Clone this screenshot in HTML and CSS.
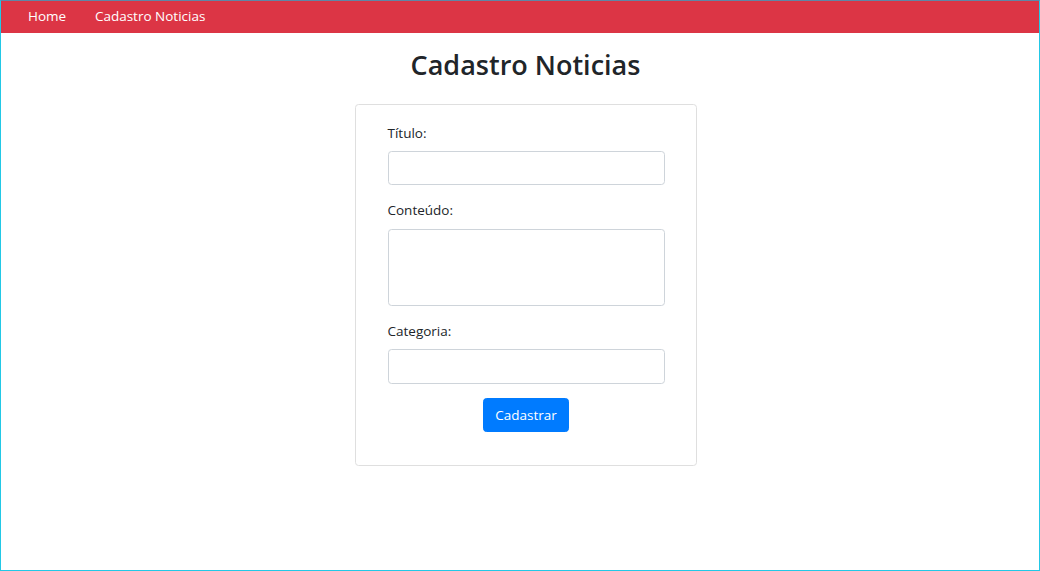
FILE: index.html
```html
<!DOCTYPE html>
<html lang="pt-BR">
<head>
<meta charset="utf-8">
<title>Cadastro Noticias</title>
<link rel="stylesheet" href="styles.css">
</head>
<body>
<div class="frame">
  <nav class="navbar">
    <a class="nav-link" href="#">Home</a>
    <a class="nav-link" href="#">Cadastro Noticias</a>
  </nav>
  <main class="main">
    <h2 class="title">Cadastro Noticias</h2>
    <form class="card">
      <div class="form-group">
        <label class="label" for="titulo">Título:</label>
        <input class="control" id="titulo" type="text">
      </div>
      <div class="form-group">
        <label class="label" for="conteudo">Conteúdo:</label>
        <textarea class="control area" id="conteudo" rows="3"></textarea>
      </div>
      <div class="form-group">
        <label class="label" for="categoria">Categoria:</label>
        <input class="control" id="categoria" type="text">
      </div>
      <div class="form-group actions">
        <button class="btn" type="button">Cadastrar</button>
      </div>
    </form>
  </main>
</div>
</body>
</html>
```

FILE: styles.css
```css
html, body {
  margin: 0;
  padding: 0;
}
body {
  font-family: "Open Sans", "Noto Sans", "Liberation Sans", sans-serif;
  color: #212529;
  background: #fff;
}
.frame {
  box-sizing: border-box;
  width: 1040px;
  height: 571px;
  border: 1px solid #22c8e6;
  border-top-color: #5f86a6;
  overflow: hidden;
}
.navbar {
  display: flex;
  align-items: center;
  height: 32px;
  background: #dc3545;
  padding: 0 12.6px;
}
.nav-link {
  color: #fff;
  text-decoration: none;
  font-size: 13.5px;
  line-height: 21.6px;
  padding: 0 14.4px;
}
.main {
  display: flex;
  flex-direction: column;
  align-items: center;
  padding-left: 11px;
}
.title {
  font-size: 27px;
  font-weight: 600;
  line-height: 34.5px;
  margin: 15px 0 21px;
}
.card {
  box-sizing: border-box;
  width: 342px;
  border: 1px solid #dfdfdf;
  border-radius: 3.6px;
  padding: 18px 31px 18px 32px;
  display: flex;
  flex-direction: column;
}
.form-group {
  display: flex;
  flex-direction: column;
  margin-bottom: 14.4px;
}
.label {
  font-size: 13.5px;
  line-height: 21.6px;
  margin-bottom: 7.2px;
}
.control {
  box-sizing: border-box;
  width: 100%;
  height: 34.2px;
  border: 1px solid #ced4da;
  border-radius: 3.6px;
  padding: 5.4px 10.8px;
  font: inherit;
  font-size: 13.5px;
  line-height: 21.6px;
  margin: 0;
}
.area {
  height: 77.6px;
  resize: none;
}
.actions {
  align-items: center;
}
.btn {
  height: 34.2px;
  padding: 0 10.8px;
  background: #007bff;
  color: #fff;
  border: 1px solid #007bff;
  border-radius: 3.6px;
  font: inherit;
  font-size: 13.5px;
}
```
